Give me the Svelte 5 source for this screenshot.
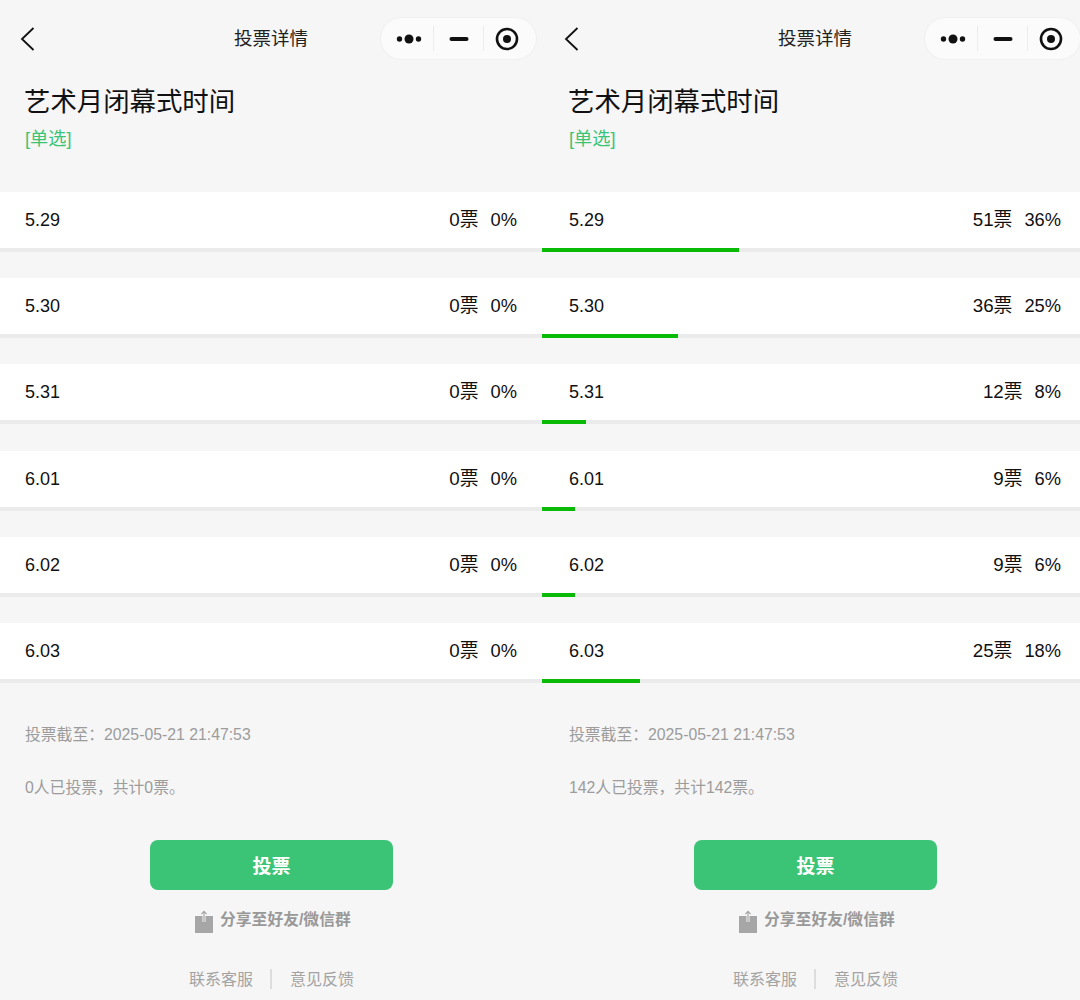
<script>
  const empty = [
    { label: '5.29', votes: 0, pct: 0, bar: 0 },
    { label: '5.30', votes: 0, pct: 0, bar: 0 },
    { label: '5.31', votes: 0, pct: 0, bar: 0 },
    { label: '6.01', votes: 0, pct: 0, bar: 0 },
    { label: '6.02', votes: 0, pct: 0, bar: 0 },
    { label: '6.03', votes: 0, pct: 0, bar: 0 },
  ];
  const voted = [
    { label: '5.29', votes: 51, pct: 36, bar: 197 },
    { label: '5.30', votes: 36, pct: 25, bar: 136 },
    { label: '5.31', votes: 12, pct: 8, bar: 44 },
    { label: '6.01', votes: 9, pct: 6, bar: 33 },
    { label: '6.02', votes: 9, pct: 6, bar: 33 },
    { label: '6.03', votes: 25, pct: 18, bar: 98 },
  ];
  const panels = [
    { people: 0, total: 0, options: empty },
    { people: 142, total: 142, options: voted },
  ];
</script>

<div class="page">
  {#each panels as panel}
    <section class="panel">
      <header class="nav">
        <svg class="back" width="16" height="24" viewBox="0 0 16 24">
          <path d="M13.5 1 L2 12 L13.5 23" fill="none" stroke="#111" stroke-width="1.8" />
        </svg>
        <span class="nav-title">投票详情</span>
        <div class="capsule">
          <div class="cap-item dots">
            <svg width="26" height="10" viewBox="0 0 26 10">
              <circle cx="3.5" cy="5" r="2.7" fill="#111" />
              <circle cx="13" cy="5" r="4.5" fill="#111" />
              <circle cx="22.5" cy="5" r="2.7" fill="#111" />
            </svg>
          </div>
          <div class="cap-item">
            <svg width="20" height="6" viewBox="0 0 20 6">
              <rect x="0.5" y="1" width="19" height="4" rx="2" fill="#111" />
            </svg>
          </div>
          <div class="cap-item ring">
            <svg width="24" height="24" viewBox="0 0 24 24">
              <circle cx="12" cy="12" r="10" fill="none" stroke="#111" stroke-width="2.6" />
              <circle cx="12" cy="12" r="4" fill="#111" />
            </svg>
          </div>
        </div>
      </header>

      <div class="head">
        <h1>艺术月闭幕式时间</h1>
        <p class="kind">[单选]</p>
      </div>

      <ul class="options">
        {#each panel.options as opt}
          <li class="option">
            <div class="row">
              <span class="label">{opt.label}</span>
              <span class="count">{opt.votes}票</span>
              <span class="pct">{opt.pct}%</span>
            </div>
            <div class="track"><div class="fill" style="width: {opt.bar}px"></div></div>
          </li>
        {/each}
      </ul>

      <p class="meta first">投票截至：2025-05-21 21:47:53</p>
      <p class="meta second">{panel.people}人已投票，共计{panel.total}票。</p>

      <button class="vote">投票</button>

      <div class="share">
        <svg width="18" height="23" viewBox="0 0 18 23">
          <path d="M0 6 H7.5 V12 H10.5 V6 H18 V23 H0 Z" fill="#a6a6a6" />
          <path d="M9 12 V1.5 M6.4 4.2 L9 1.4 L11.6 4.2" fill="none" stroke="#a6a6a6" stroke-width="1.2" />
        </svg>
        <span>分享至好友/微信群</span>
      </div>

      <footer class="links">
        <span>联系客服</span>
        <i class="sep"></i>
        <span>意见反馈</span>
      </footer>
    </section>
  {/each}
</div>

<style>
  :global(body) {
    margin: 0;
    background: #f6f6f6;
  }
  .page {
    display: grid;
    grid-template-columns: 542px 538px;
    height: 1000px;
    overflow: hidden;
    font-family: "Liberation Sans", "Noto Sans CJK SC", sans-serif;
    color: #111;
  }
  .panel {
    --shift: 0px;
    --end: 25px;
    display: flex;
    flex-direction: column;
    min-width: 0;
  }
  .panel:nth-child(2) {
    --shift: 2px;
    --end: 19px;
  }
  .nav {
    display: flex;
    align-items: center;
    height: 60px;
    padding: 18px 0 0 calc(20px + var(--shift));
    box-sizing: border-box;
    position: relative;
  }
  .nav-title {
    position: absolute;
    left: calc(234px + var(--shift));
    top: 27px;
    font-size: 18.5px;
    line-height: 24px;
    color: #222;
  }
  .capsule {
    position: absolute;
    left: calc(380px + var(--shift));
    top: 17px;
    width: 157px;
    height: 43px;
    display: grid;
    grid-template-columns: 53px 50px 54px;
    box-sizing: border-box;
    background: #fbfbfb;
    border: 1px solid #f0f0f0;
    border-radius: 22px;
  }
  .cap-item {
    display: flex;
    align-items: center;
    justify-content: center;
    position: relative;
  }
  .cap-item + .cap-item::before {
    content: '';
    position: absolute;
    left: -1px;
    top: 8px;
    bottom: 8px;
    width: 1px;
    background: #ececec;
  }
  .dots svg {
    margin-left: 3px;
  }
  .ring svg {
    margin-right: 8px;
  }
  .head {
    padding: 24px 0 0 calc(24px + var(--shift));
  }
  h1 {
    margin: 0;
    font-size: 26.4px;
    line-height: 36px;
    font-weight: 400;
    color: #111;
  }
  .kind {
    margin: 7px 0 0 1px;
    font-size: 18.2px;
    line-height: 24px;
    color: #3cc476;
  }
  .options {
    list-style: none;
    margin: 0;
    padding: 41px 0 0;
  }
  .option {
    padding-bottom: 26.2px;
  }
  .row {
    display: flex;
    align-items: baseline;
    height: 56px;
    line-height: 56px;
    padding: 0 var(--end) 0 calc(25px + var(--shift));
    background: #fff;
    font-size: 18px;
  }
  .label {
    flex: 1;
  }
  .count {
    margin-right: 12px;
    font-size: 18.8px;
  }
  .pct {
    font-size: 18.3px;
  }
  .track {
    height: 4px;
    background: #ebebeb;
  }
  .fill {
    height: 4px;
    background: #09bb07;
  }
  .meta {
    margin: 0;
    padding-left: calc(25px + var(--shift));
    font-size: 15.8px;
    line-height: 22px;
    color: #9c9c9c;
  }
  .first {
    margin-top: 15px;
  }
  .second {
    margin-top: 31px;
  }
  .vote {
    align-self: flex-start;
    margin: 40.5px 0 0 calc(150px + var(--shift));
    width: 243px;
    height: 50px;
    border: none;
    border-radius: 8px;
    background: #3cc476;
    color: #fff;
    font: inherit;
    font-size: 19px;
    font-weight: 700;
  }
  .share {
    display: flex;
    align-items: center;
    gap: 7px;
    margin: 17px 0 0 calc(195px + var(--shift));
    font-size: 15.8px;
    font-weight: 700;
    color: #999;
  }
  .share svg {
    margin: 3px 0 -3px;
  }
  .links {
    display: flex;
    align-items: center;
    margin: 36px 0 0 calc(189px + var(--shift));
    font-size: 16px;
    color: #a3a3a3;
  }
  .sep {
    width: 2px;
    height: 20px;
    margin: 3px 18px 0 17px;
    background: #ddd;
  }
</style>
